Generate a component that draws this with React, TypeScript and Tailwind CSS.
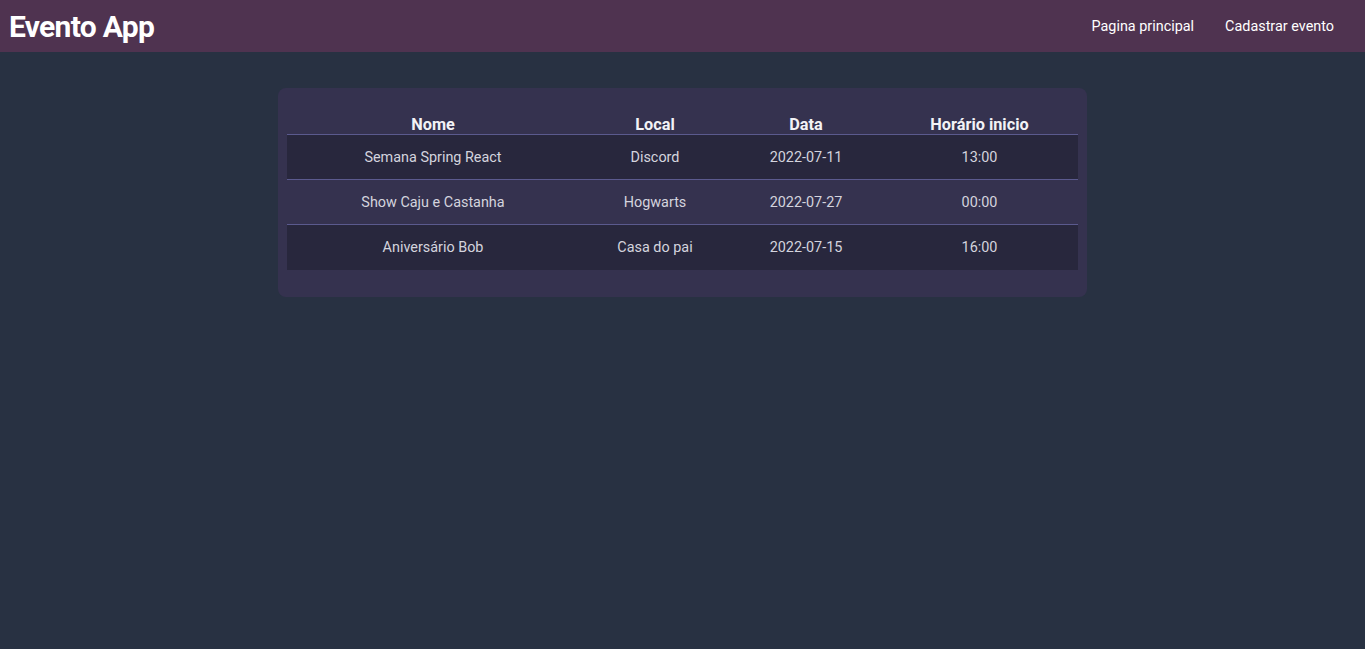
import React from "react";

const eventos = [
  { nome: "Semana Spring React", local: "Discord", data: "2022-07-11", hora: "13:00" },
  { nome: "Show Caju e Castanha", local: "Hogwarts", data: "2022-07-27", hora: "00:00" },
  { nome: "Aniversário Bob", local: "Casa do pai", data: "2022-07-15", hora: "16:00" },
];

function App() {
  return (
    <div className="min-h-screen bg-[#283142] font-['Roboto',sans-serif]">
      <header className="h-[52px] bg-[#4f3350] flex items-center justify-between pl-[9px] pr-[31px]">
        <h1 className="text-white text-[30px] font-bold tracking-[-0.7px]">Evento App</h1>
        <nav className="flex gap-[31px] text-white text-[14.4px] pt-[2px]">
          <a href="#">Pagina principal</a>
          <a href="#">Cadastrar evento</a>
        </nav>
      </header>
      <main className="flex justify-center pt-[36px]">
        <div className="w-[809px] bg-[#35324f] rounded-lg px-[9px] pt-[23px] pb-[27px]">
          <table className="w-full border-collapse text-center">
            <thead>
              <tr className="text-[#f2f2f6] text-[16.3px] font-bold leading-[16px] border-b border-[#5b5a8e]">
                <th className="w-[292px] h-[23px] align-bottom pb-[1px]">Nome</th>
                <th className="w-[152px] align-bottom pb-[1px]">Local</th>
                <th className="w-[150px] align-bottom pb-[1px]">Data</th>
                <th className="align-bottom pb-[1px]">Horário inicio</th>
              </tr>
            </thead>
            <tbody className="text-[#d4d4de] text-[14.4px]">
              {eventos.map((e, i) => (
                <tr
                  key={e.nome}
                  className={
                    i % 2 === 0
                      ? "bg-[#28273d] border-b " + (i < eventos.length - 1 ? "border-[#5b5a8e]" : "border-[#28273d]")
                      : "bg-[#35324f] border-b border-[#5b5a8e]"
                  }
                >
                  <td className="h-[45px] pt-[2px]">{e.nome}</td>
                  <td className="pt-[2px]">{e.local}</td>
                  <td className="pt-[2px]">{e.data}</td>
                  <td className="pt-[2px]">{e.hora}</td>
                </tr>
              ))}
            </tbody>
          </table>
        </div>
      </main>
    </div>
  );
}

export default App;
